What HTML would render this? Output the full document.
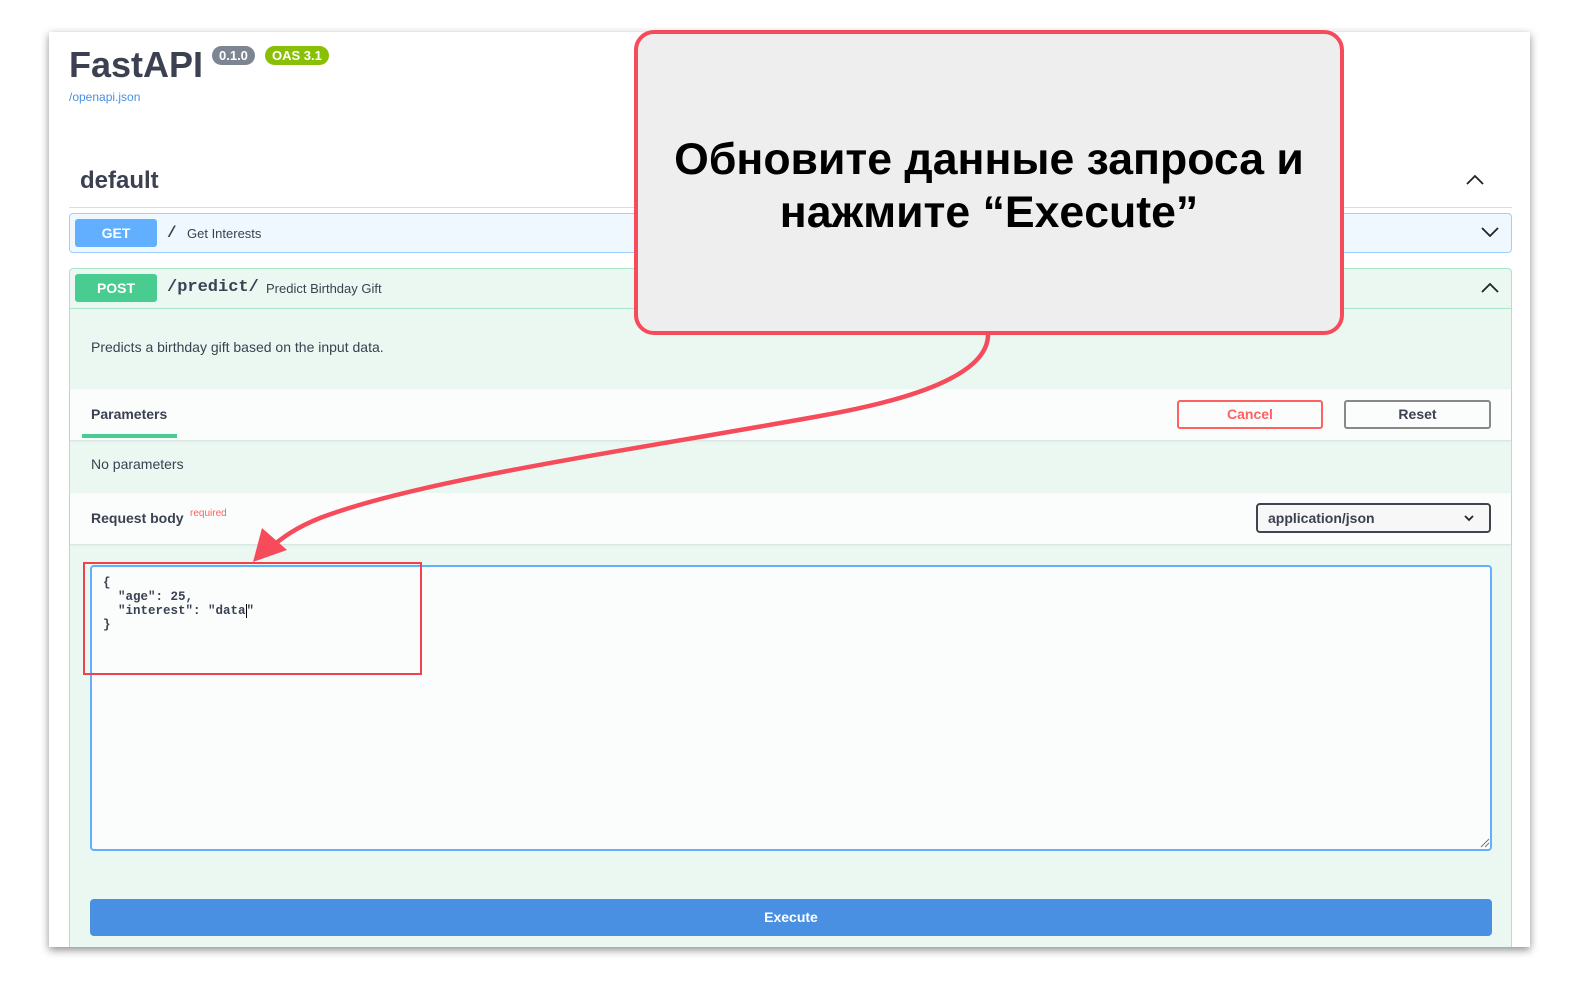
<!DOCTYPE html>
<html><head><meta charset="utf-8"><style>
*{box-sizing:border-box;margin:0;padding:0}
body{width:1572px;height:990px;background:#fff;position:relative;overflow:hidden;font-family:"Liberation Sans",sans-serif;color:#3b4151}
.a{position:absolute}
.page{left:49px;top:32px;width:1481px;height:915px;background:#fff;box-shadow:0 3px 8px rgba(0,0,0,.45);overflow:hidden}
.badge{border-radius:10px;color:#fff;font-weight:bold;font-size:13px;height:19px;line-height:19px;padding:0 7px}
.mono{font-family:"Liberation Mono",monospace}
</style></head><body>
<div class="a page"><div class="a" style="left:20px;top:236px;width:1443px;height:700px;background:#ebf8f2;border:1px solid #a9e5c9;border-radius:4px"></div></div>
<div class="a" style="left:69px;top:44px;font-size:36px;font-weight:bold;color:#3b4151">FastAPI</div>
<div class="a badge" style="left:212px;top:46px;background:#7d8492">0.1.0</div>
<div class="a badge" style="left:265px;top:46px;background:#89bf04">OAS 3.1</div>
<div class="a" style="left:69px;top:90px;font-size:12px;color:#4990e2">/openapi.json</div>
<div class="a" style="left:80px;top:167px;font-size:24px;font-weight:bold">default</div>
<div class="a" style="left:69px;top:207px;width:1443px;height:1px;background:#dcdcdc"></div>
<svg class="a" style="left:1466px;top:174px" width="18" height="12"><path d="M1 10 L9 2 L17 10" stroke="#222" stroke-width="1.8" fill="none"/></svg>
<!-- GET -->
<div class="a" style="left:69px;top:213px;width:1443px;height:40px;background:#eff7ff;border:1px solid #9fcffd;border-radius:4px"></div>
<div class="a" style="left:75px;top:219px;width:82px;height:28px;background:#61affe;border-radius:3px;color:#fff;font-weight:bold;font-size:14px;text-align:center;line-height:28px">GET</div>
<div class="a mono" style="left:167px;top:224px;font-size:16px;font-weight:bold">/</div>
<div class="a" style="left:187px;top:226px;font-size:13px">Get Interests</div>
<svg class="a" style="left:1480px;top:225px" width="20" height="14"><path d="M2 3 L10 11 L18 3" stroke="#222" stroke-width="1.8" fill="none"/></svg>
<!-- POST -->
<div class="a" style="left:70px;top:308px;width:1441px;height:1px;background:#a9e5c9"></div>
<div class="a" style="left:75px;top:274px;width:82px;height:28px;background:#49cc90;border-radius:3px;color:#fff;font-weight:bold;font-size:14px;text-align:center;line-height:28px">POST</div>
<div class="a mono" style="left:167px;top:278px;font-size:17px;font-weight:bold">/predict/</div>
<div class="a" style="left:266px;top:281px;font-size:13px">Predict Birthday Gift</div>
<svg class="a" style="left:1480px;top:281px" width="20" height="14"><path d="M2 11 L10 3 L18 11" stroke="#222" stroke-width="1.8" fill="none"/></svg>
<div class="a" style="left:91px;top:339px;font-size:14px">Predicts a birthday gift based on the input data.</div>
<div class="a" style="left:70px;top:389px;width:1441px;height:51px;background:#fbfdfc;box-shadow:0 1px 2px rgba(0,0,0,.1)"></div>
<div class="a" style="left:91px;top:406px;font-size:14px;font-weight:bold">Parameters</div>
<div class="a" style="left:82px;top:434px;width:95px;height:4px;background:#49cc90"></div>
<div class="a" style="left:1177px;top:400px;width:146px;height:29px;border:2px solid #ff6060;border-radius:3px;color:#ff6060;font-weight:bold;font-size:14px;text-align:center;line-height:25px;background:#fbfdfc">Cancel</div>
<div class="a" style="left:1344px;top:400px;width:147px;height:29px;border:2px solid #888;border-radius:3px;color:#3b4151;font-weight:bold;font-size:14px;text-align:center;line-height:25px;background:#fbfdfc">Reset</div>
<div class="a" style="left:91px;top:456px;font-size:14px">No parameters</div>
<div class="a" style="left:70px;top:493px;width:1441px;height:51px;background:#fbfdfc;box-shadow:0 1px 2px rgba(0,0,0,.1)"></div>
<div class="a" style="left:91px;top:510px;font-size:14px;font-weight:bold">Request body</div>
<div class="a" style="left:190px;top:508px;font-size:10px;color:#ff6060">required</div>
<div class="a" style="left:1256px;top:503px;width:235px;height:30px;border:2px solid #41444e;border-radius:4px;background:#f7f7f7;font-size:14px;font-weight:bold;line-height:26px;padding-left:10px">application/json</div>
<svg class="a" style="left:1463px;top:514px" width="12" height="8"><path d="M2 2 L6 6 L10 2" stroke="#222" stroke-width="1.8" fill="none"/></svg>
<div class="a" style="left:90px;top:565px;width:1402px;height:286px;background:#fbfdfd;border:2px solid #61affe;border-radius:4px"></div>
<pre class="a mono" style="left:103px;top:576px;font-size:12.5px;line-height:14px;font-weight:bold;color:#3b4151">{
  "age": 25,
  "interest": "data<span style="border-left:1px solid #000"></span>"
}</pre>
<svg class="a" style="left:1480px;top:838px" width="10" height="10"><path d="M1 9 L9 1 M5 9 L9 5" stroke="#777" stroke-width="1"/></svg>
<div class="a" style="left:90px;top:899px;width:1402px;height:37px;background:#4990e2;border-radius:4px;color:#fff;font-weight:bold;font-size:14px;text-align:center;line-height:37px">Execute</div>
<!-- annotation -->
<div class="a" style="left:83px;top:562px;width:339px;height:113px;border:2px solid #f0414f"></div>
<div class="a" style="left:634px;top:30px;width:710px;height:305px;background:#eeeeee;border:4px solid #f54b5a;border-radius:20px"></div>
<div class="a" style="left:640px;top:133px;width:698px;text-align:center;font-family:'Liberation Sans',sans-serif;font-weight:bold;font-size:44.6px;line-height:53px;color:#000">Обновите данные запроса и<br>нажмите “Execute”</div>
<svg class="a" style="left:0;top:0" width="1572" height="990">
<path d="M988,333 C990,375 910,400 820,416 C620,452 420,480 320,518 C295,528 282,538 270,548" stroke="#f54b5a" stroke-width="4.5" fill="none"/>
<path d="M253,562 L262,528 L287,550 Z" fill="#f54b5a"/>
</svg>
</body></html>
